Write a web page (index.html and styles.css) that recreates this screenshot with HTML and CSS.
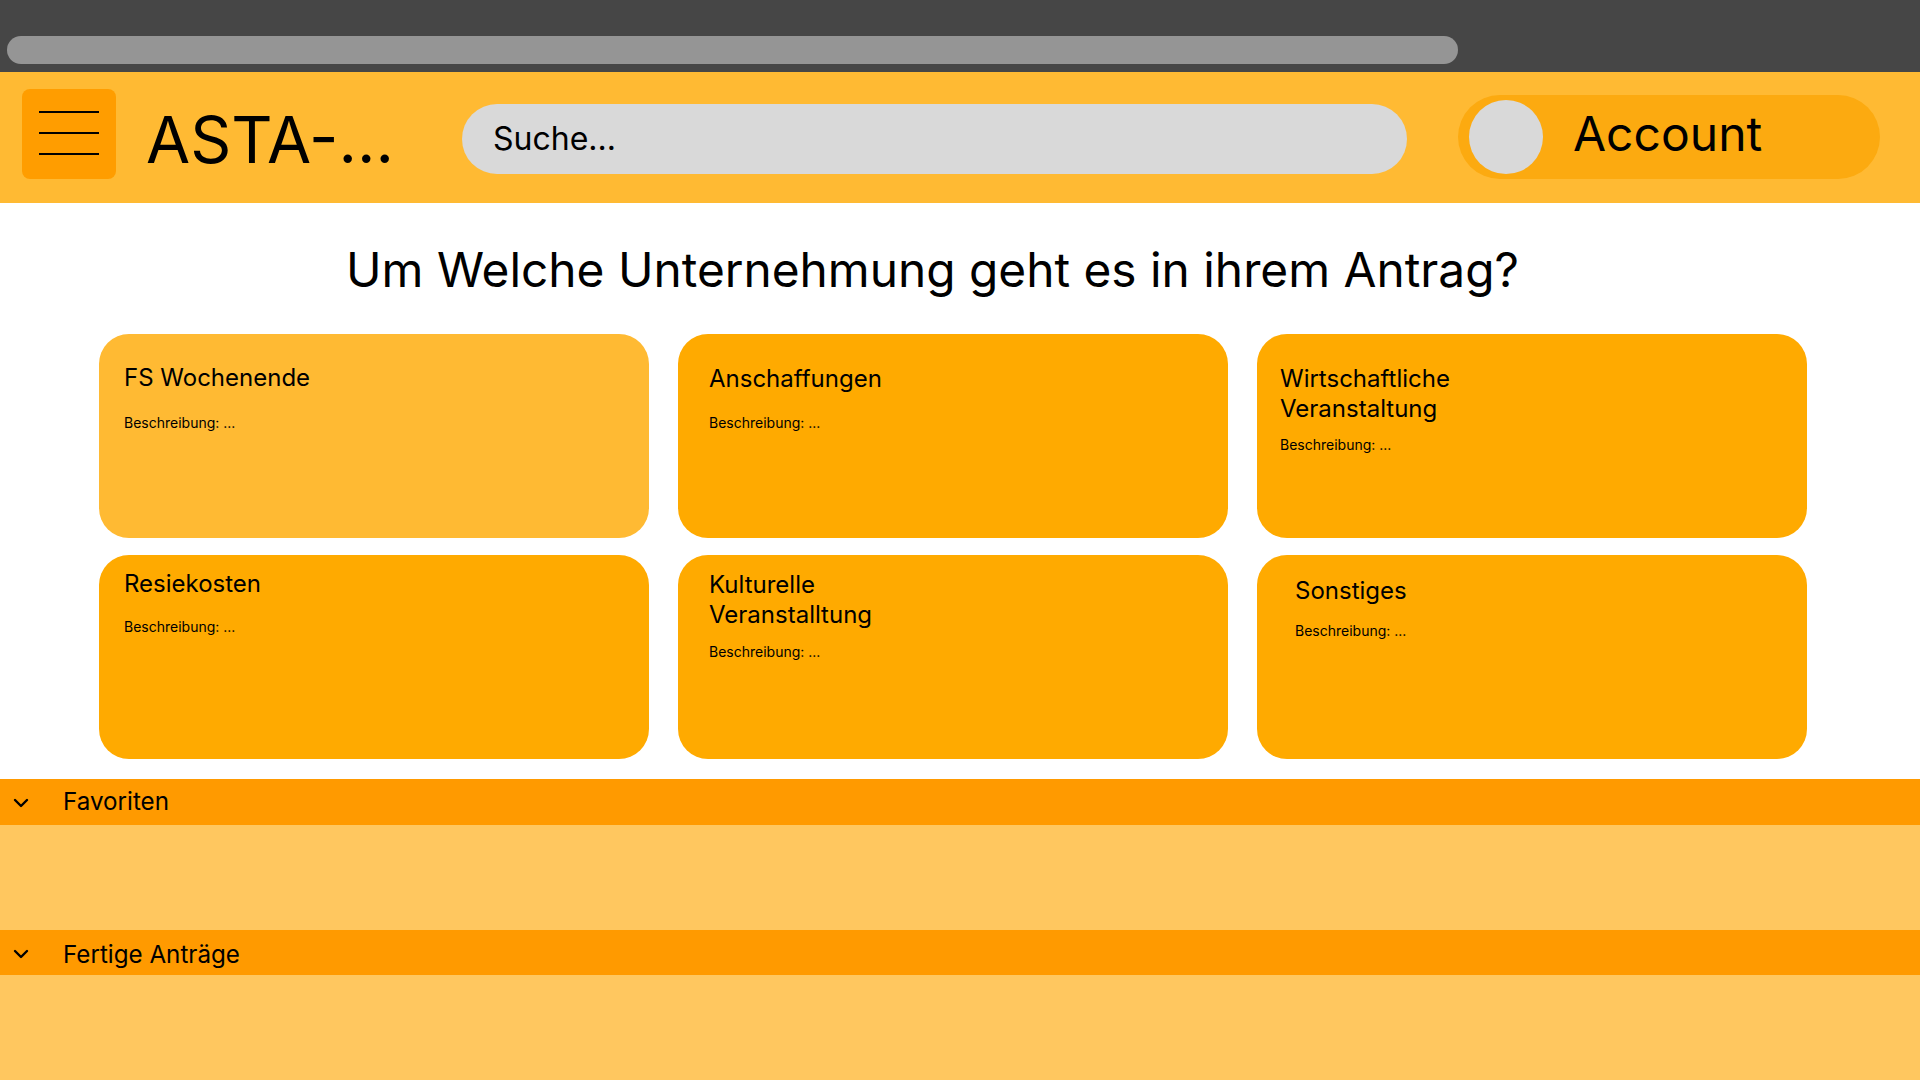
FILE: index.html
```html
<!DOCTYPE html>
<html lang="de">
<head>
<meta charset="utf-8">
<title>ASTA</title>
<link rel="stylesheet" href="styles.css">
</head>
<body>
<div class="chrome">
  <div class="chrome-pill"></div>
</div>
<header class="header">
  <div class="menu-btn">
    <span class="menu-line"></span>
    <span class="menu-line"></span>
    <span class="menu-line"></span>
  </div>
  <div class="brand">ASTA-...</div>
  <div class="search">Suche...</div>
  <div class="account">
    <span class="avatar"></span>
    <span class="account-label">Account</span>
  </div>
</header>
<main class="main">
  <h1 class="question">Um Welche Unternehmung geht es in ihrem Antrag?</h1>
  <div class="cards">
    <div class="card card-light c1">
      <div class="card-title">FS Wochenende</div>
      <div class="card-desc">Beschreibung: ...</div>
    </div>
    <div class="card c2">
      <div class="card-title">Anschaffungen</div>
      <div class="card-desc">Beschreibung: ...</div>
    </div>
    <div class="card c3">
      <div class="card-title two">Wirtschaftliche<br>Veranstaltung</div>
      <div class="card-desc">Beschreibung: ...</div>
    </div>
    <div class="card c4">
      <div class="card-title">Resiekosten</div>
      <div class="card-desc">Beschreibung: ...</div>
    </div>
    <div class="card c5">
      <div class="card-title two">Kulturelle<br>Veranstalltung</div>
      <div class="card-desc">Beschreibung: ...</div>
    </div>
    <div class="card c6">
      <div class="card-title">Sonstiges</div>
      <div class="card-desc">Beschreibung: ...</div>
    </div>
  </div>
</main>
<section class="acc acc-first">
  <div class="acc-head">
    <svg class="chev" width="16" height="10" viewBox="0 0 16 10"><polyline points="2,2 8,8 14,2" fill="none" stroke="#000" stroke-width="2.4" stroke-linecap="round" stroke-linejoin="round"/></svg>
    <span class="acc-title">Favoriten</span>
  </div>
  <div class="acc-body"></div>
</section>
<section class="acc acc-second">
  <div class="acc-head">
    <svg class="chev" width="16" height="10" viewBox="0 0 16 10"><polyline points="2,2 8,8 14,2" fill="none" stroke="#000" stroke-width="2.4" stroke-linecap="round" stroke-linejoin="round"/></svg>
    <span class="acc-title">Fertige Anträge</span>
  </div>
  <div class="acc-body"></div>
</section>
</body>
</html>
```
FILE: styles.css
```css
* { box-sizing: border-box; }
html, body { margin: 0; padding: 0; }
body {
  font-family: Inter, "Noto Sans", sans-serif;
  color: #000;
  background: #fff;
  width: 1920px;
  height: 1080px;
  overflow: hidden;
}

.chrome {
  height: 72px;
  background: #464646;
  padding: 36px 0 0 7px;
}
.chrome-pill {
  width: 1451px;
  height: 28px;
  border-radius: 14px;
  background: #959595;
}

.header {
  height: 131px;
  background: #FFBA33;
  display: flex;
  align-items: flex-start;
}
.menu-btn {
  margin: 17px 0 0 22px;
  width: 94px;
  height: 90px;
  border-radius: 8px;
  background: #FF9D00;
  display: flex;
  flex-direction: column;
  align-items: center;
  gap: 19px;
  padding-top: 22px;
}
.menu-line {
  display: block;
  width: 60px;
  height: 2px;
  background: #000;
}
.brand {
  flex: 0 0 316px;
  margin: 29px 0 0 30px;
  font-size: 64px;
  line-height: normal;
  white-space: nowrap;
}
.search {
  flex: 0 0 945px;
  margin-top: 32px;
  height: 70px;
  border-radius: 35px;
  background: #D9D9D9;
  padding-left: 31px;
  font-size: 32px;
  line-height: 70px;
}
.account {
  flex: 0 0 422px;
  margin: 23px 0 0 51px;
  height: 84px;
  border-radius: 42px;
  background: #FCAA10;
  display: flex;
  align-items: center;
  padding-left: 11px;
}
.avatar {
  width: 74px;
  height: 74px;
  border-radius: 50%;
  background: #D9D9D9;
  flex: none;
}
.account-label {
  align-self: flex-start;
  margin: 9px 0 0 30px;
  font-size: 48px;
  line-height: normal;
}

.main {
  padding-top: 38px;
}
.question {
  margin: 0;
  font-size: 47.8px;
  font-weight: 400;
  line-height: normal;
  text-align: center;
  padding-right: 55px;
}
.cards {
  margin-top: 35.2px;
  padding-left: 99px;
  display: grid;
  grid-template-columns: repeat(3, 550px);
  grid-auto-rows: 204px;
  column-gap: 29px;
  row-gap: 17px;
}
.card {
  background: #FFAA00;
  border-radius: 30px;
  display: flex;
  flex-direction: column;
}
.card-light { background: #FFBA33; }
.card-title {
  font-size: 24px;
  line-height: normal;
}
.card-title.two { line-height: 29.4px; }
.card-desc {
  font-size: 14px;
  line-height: normal;
}
.c1 { padding: 29px 0 0 25px; }
.c1 .card-desc { margin-top: 21.5px; }
.c2 { padding: 30px 0 0 31px; }
.c2 .card-desc { margin-top: 21px; }
.c3 { padding: 30px 0 0 23px; }
.c3 .card-desc { margin-top: 13px; }
.c4 { padding: 14px 0 0 25px; }
.c4 .card-desc { margin-top: 20px; }
.c5 { padding: 15px 0 0 31px; }
.c5 .card-desc { margin-top: 14px; }
.c6 { padding: 21px 0 0 38px; }
.c6 .card-desc { margin-top: 17px; }

.acc-first { margin-top: 20px; }
.acc-head {
  height: 46px;
  background: #FF9A00;
  display: flex;
  align-items: center;
  padding-left: 13px;
}
.acc-second .acc-head { height: 45px; }
.chev { flex: none; display: block; margin-top: 2px; }
.acc-title {
  margin-left: 34px;
  margin-bottom: 2px;
  font-size: 24.2px;
  line-height: normal;
}
.acc-second .acc-title {
  margin-bottom: 0;
  margin-top: 3px;
}
.acc-body {
  height: 105px;
  background: #FFC75F;
}
```
